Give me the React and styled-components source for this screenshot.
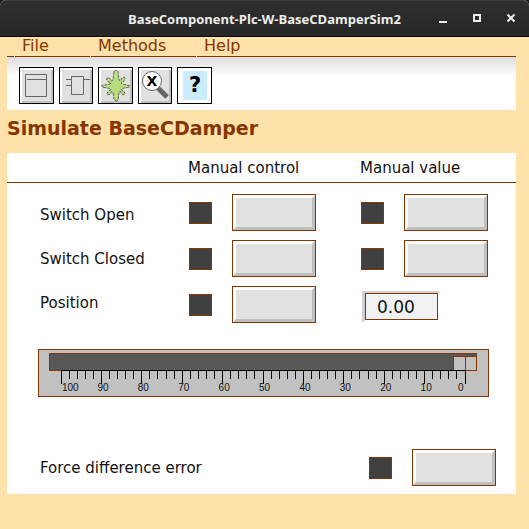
import React, { useState } from "react";
import styled, { createGlobalStyle } from "styled-components";

const brown = "#853600";
const sand = "#ffe1aa";

const GlobalStyle = createGlobalStyle`
  * { box-sizing: border-box; }
  body {
    margin: 0;
    background: ${sand};
    font-family: "DejaVu Sans", sans-serif;
    font-size: 15px;
    color: #111;
  }
  button, input { font: inherit; color: inherit; margin: 0; }
`;

const Window = styled.div`
  min-height: 100vh;
  display: flex;
  flex-direction: column;
  background: ${sand};
`;

const TitleBar = styled.header`
  display: grid;
  grid-template-columns: 1fr auto 1fr;
  align-items: center;
  height: 37px;
  padding: 0 8px;
  color: #eeeeec;
  background: linear-gradient(#303030, #262626);
  border-top: 1px solid #3c3c3c;
  border-bottom: 1px solid #050505;
  border-radius: 6px 6px 0 0;
  box-shadow: 0 -8px 0 #1a1a1a;
`;

const WindowTitle = styled.div`
  grid-column: 2;
  font: bold 13px/18px "Open Sans", "Noto Sans", sans-serif;
`;

const WindowButtons = styled.div`
  display: flex;
  justify-content: flex-end;
  gap: 22px;
  padding-right: 4px;
`;

const WindowButton = styled.button`
  width: 12px;
  height: 12px;
  padding: 0;
  border: 0;
  background: none;
  svg { display: block; }
`;

const Content = styled.div`
  padding: 0 13px 0 7px;
`;

const MenuBar = styled.nav`
  display: flex;
  height: 20px;
  padding-left: 7px;
  border-bottom: 1px solid ${brown};
`;

const MenuItem = styled.button`
  flex: none;
  width: ${(p) => p.$width};
  height: 20px;
  padding: 0 0 0 7px;
  border: 0;
  border-left: 1px solid ${sand};
  background: none;
  color: ${brown};
  font-size: 16px;
  line-height: 18px;
  text-align: left;
  display: flex;
`;

const ToolBar = styled.div`
  height: 53px;
  padding: 10px 12px 6px;
  background: linear-gradient(#dedede, #fff 20px);
`;

const ToolGroup = styled.div`
  display: grid;
  grid-template-columns: repeat(5, 1fr);
  gap: 5px;
  max-width: 193px;
`;

const ToolButton = styled.button`
  height: 37px;
  padding: 0;
  overflow: hidden;
  border: 1px solid #000;
  background: ${(p) => (p.$plain ? "#fff" : "#e1e1e1")};
  box-shadow: ${(p) =>
    p.$plain ? "none" : "inset 2px 2px 0 #fff, inset -2px -2px 0 #bfbfbf"};
  svg { display: block; }
`;

const Heading = styled.h1`
  margin: 0;
  height: 43px;
  color: ${brown};
  font-size: 19px;
  line-height: 37px;
`;

const Panel = styled.main`
  background: #fff;
  padding-bottom: 8px;
`;

const columns = "181px 172px 1fr";

const ColumnHeads = styled.div`
  display: grid;
  grid-template-columns: ${columns};
  line-height: 31px;
  height: 30px;
  border-bottom: 1px solid ${brown};
`;

const ColumnHead = styled.div`
  grid-column: ${(p) => p.$column};
`;

const Fields = styled.div`
  display: grid;
  grid-template-columns: ${columns};
  padding-top: 11px;
`;

const Labels = styled.div`
  display: flex;
  flex-direction: column;
  gap: 26px;
  padding: 12px 0 0 33px;
`;

const Label = styled.label`
  line-height: 18px;
`;

const Controls = styled.div`
  display: flex;
  flex-direction: column;
  gap: 9px;
`;

const Control = styled.div`
  display: flex;
  align-items: ${(p) => p.$align || "center"};
  gap: 20px;
  height: 37px;
  padding-left: 1px;
`;

const Lamp = styled.span`
  width: 23px;
  height: 22px;
  background: ${(p) => (p.$on ? "#00d000" : "#404040")};
  border: 1px solid ${brown};
`;

const PushButton = styled.button`
  width: 84px;
  height: 37px;
  padding: 0;
  border: 4px solid;
  border-color: #fff #bfbfbf #bfbfbf #fff;
  outline: 1px solid ${brown};
  outline-offset: -1px;
  background: #e1e1e1;
`;

const ValueFrame = styled.div`
  display: flex;
  width: 79px;
  height: 32px;
  margin-left: 1px;
  border: solid;
  border-width: 2px 3px 3px;
  border-color: #d0d0d0 #fff #fff #d0d0d0;
`;

const ValueInput = styled.input`
  width: 100%;
  height: 27px;
  padding: 0 0 0 11px;
  border: 1px solid ${brown};
  border-radius: 0;
  background: #f2f2f2;
  font-size: 17px;
`;

const Scale = styled.div`
  height: 48px;
  margin: 26px 27px 0 31px;
  padding: 3px 11px 0 10px;
  border: 1px solid ${brown};
  background: #c1c1c1;
`;

const Slider = styled.input`
  appearance: none;
  display: block;
  width: 100%;
  height: 18px;
  padding: 0;
  direction: rtl;
  background: #585858;
  border: solid ${brown};
  border-width: 1px 0 1px 1px;
  &::-webkit-slider-runnable-track {
    height: 16px;
    padding-top: 2px;
  }
  &::-webkit-slider-thumb {
    appearance: none;
    width: 24px;
    height: 14px;
    border: 1px solid ${brown};
    border-bottom: 0;
    border-radius: 0;
    background: linear-gradient(90deg, #c1c1c1 11px, ${brown} 11px 12px, #c1c1c1 12px);
  }
`;

const Ticks = styled.div`
  position: relative;
  margin: -1px 12px 0 12px;
  svg { display: block; width: 100%; height: 24px; overflow: visible; }
  text { font: 10px "Liberation Sans", sans-serif; fill: #111; }
`;

const ErrorRow = styled.div`
  display: flex;
  align-items: center;
  justify-content: space-between;
  padding: 0 20px 0 33px;
  margin-top: 52px;
`;

function WindowIcon({ d }) {
  return (
    <svg width="12" height="12" fill="none" stroke="#eeeeec" strokeWidth="2">
      <path d={d} />
    </svg>
  );
}

function ToolIcon({ children }) {
  return (
    <svg width="33" height="35" viewBox="1 1 33 35" fill="none" stroke="#666">
      {children}
    </svg>
  );
}

const tickMarks = Array.from({ length: 51 }, (_, i) => i);

function PositionScale() {
  const [position, setPosition] = useState(0);
  return (
    <Scale>
      <Slider
        type="range"
        aria-label="Position scale"
        min="0"
        max="100"
        value={position}
        onChange={(e) => setPosition(Number(e.target.value))}
      />
      <Ticks>
        <svg stroke="#000" shapeRendering="crispEdges">
          <line x1="0" x2="100%" y1="0.5" y2="0.5" />
          {tickMarks.map((i) => (
            <line key={i} x1={`${i * 2}%`} x2={`${i * 2}%`} y1="0" y2={i % 5 ? 9 : 14} />
          ))}
          {tickMarks.filter((i) => i % 5 === 0).map((i) => (
            <text
              key={i}
              x={`${i * 2}%`}
              y="21"
              dx={i === 0 ? 1 : i === 50 ? -7 : -4}
              stroke="none"
            >
              {100 - i * 2}
            </text>
          ))}
        </svg>
      </Ticks>
    </Scale>
  );
}

function LampButton({ name }) {
  const [on, setOn] = useState(false);
  return (
    <Control>
      <Lamp $on={on} />
      <PushButton type="button" aria-label={name} onClick={() => setOn(!on)} />
    </Control>
  );
}

export default function App() {
  return (
    <Window>
      <GlobalStyle />
      <TitleBar>
        <WindowTitle>BaseComponent-Plc-W-BaseCDamperSim2</WindowTitle>
        <WindowButtons>
          <WindowButton aria-label="Minimize">
            <WindowIcon d="M2 9h8" />
          </WindowButton>
          <WindowButton aria-label="Maximize">
            <WindowIcon d="M3 2h6v6H3z" />
          </WindowButton>
          <WindowButton aria-label="Close">
            <WindowIcon d="M2.5 1.5l7 7M9.5 1.5l-7 7" />
          </WindowButton>
        </WindowButtons>
      </TitleBar>
      <Content>
        <MenuBar>
          <MenuItem $width="76px">File</MenuItem>
          <MenuItem $width="106px">Methods</MenuItem>
          <MenuItem $width="60px">Help</MenuItem>
        </MenuBar>
        <ToolBar>
          <ToolGroup>
            <ToolButton aria-label="Open object">
              <ToolIcon>
                <path d="M6.5 7.5h21v22h-21zM8 12.5h19" />
              </ToolIcon>
            </ToolButton>
            <ToolButton aria-label="Block">
              <ToolIcon>
                <path d="M12.5 9.5h12v18h-12zM7 12.5h5M25 12.5h6M7 18.5h5" />
              </ToolIcon>
            </ToolButton>
            <ToolButton aria-label="Simulate">
              <ToolIcon>
                <path
                  fill="#b7dd7e"
                  stroke="#5c6650"
                  strokeDasharray="3 1"
                  d="M16 4.500L17 3.500H19L20 4.500L21 13L22.500 14L23.500 11.500L26.500 10L27 12L25 15L23 16L24 17L31.500 18.500V20L24 21.500L23 22.500L25.500 24L27 26.500L26 28L23.500 26.500L22 24L21 25.500L20 33L18.500 34L17 33.500L16 32L15 25.500L13.500 24.500L12.500 27L9.500 28L9 26.500L10.500 24L13 22.500L12 21.500L4 20V18.500L12 17L13 16L10.500 15L8.500 12L9.500 10.500L12.500 12L13.500 14L15 13z"
                />
              </ToolIcon>
            </ToolButton>
            <ToolButton aria-label="Cross reference">
              <ToolIcon>
                <path d="M20 21l9 9" strokeWidth="5" />
                <circle cx="14" cy="14" r="9.500" fill="#fff" />
                <text x="14" y="19" textAnchor="middle" fontSize="14" fontWeight="bold" fill="#000" stroke="none">X</text>
              </ToolIcon>
            </ToolButton>
            <ToolButton $plain aria-label="Help">
              <ToolIcon>
                <path d="M6 4h24v29H6z" fill="#cbecff" stroke="none" />
                <text x="18" y="25" textAnchor="middle" fontSize="21" fontWeight="bold" fill="#000" stroke="none">?</text>
              </ToolIcon>
            </ToolButton>
          </ToolGroup>
        </ToolBar>
        <Heading>Simulate BaseCDamper</Heading>
        <Panel>
          <ColumnHeads>
            <ColumnHead $column={2}>Manual control</ColumnHead>
            <ColumnHead $column={3}>Manual value</ColumnHead>
          </ColumnHeads>
          <Fields>
            <Labels>
              <Label as="span">Switch Open</Label>
              <Label as="span">Switch Closed</Label>
              <Label htmlFor="position">Position</Label>
            </Labels>
            <Controls>
              <LampButton name="Switch Open manual control" />
              <LampButton name="Switch Closed manual control" />
              <LampButton name="Position manual control" />
            </Controls>
            <Controls>
              <LampButton name="Switch Open manual value" />
              <LampButton name="Switch Closed manual value" />
              <Control $align="flex-end">
                <ValueFrame>
                  <ValueInput id="position" defaultValue="0.00" />
                </ValueFrame>
              </Control>
            </Controls>
          </Fields>
          <PositionScale />
          <ErrorRow>
            <Label as="span">Force difference error</Label>
            <LampButton name="Force difference error" />
          </ErrorRow>
        </Panel>
      </Content>
    </Window>
  );
}
